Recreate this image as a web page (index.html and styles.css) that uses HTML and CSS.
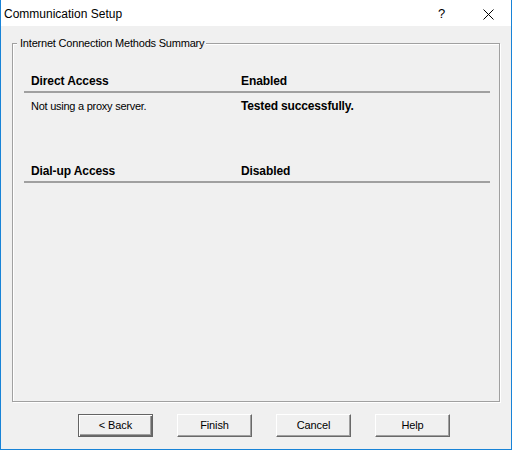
FILE: index.html
```html
<!DOCTYPE html>
<html>
<head>
<meta charset="utf-8">
<title>Communication Setup</title>
<link rel="stylesheet" href="styles.css">
</head>
<body>
<div class="window">
  <div class="titlebar">
    <span class="title">Communication Setup</span>
    <div class="caption-buttons">
      <span class="cap-btn help">?</span>
      <span class="cap-btn close">
        <svg width="11" height="11" viewBox="0 0 11 11"><path d="M0.5 0.5 L10.5 10.5 M10.5 0.5 L0.5 10.5" stroke="#000" stroke-width="1" fill="none"/></svg>
      </span>
    </div>
  </div>
  <div class="client">
    <fieldset class="group">
      <legend>Internet Connection Methods Summary</legend>
      <div class="summary">
        <div class="section">
          <div class="head"><span>Direct Access</span><span>Enabled</span></div>
          <div class="detail"><span>Not using a proxy server.</span><span class="strong">Tested successfully.</span></div>
        </div>
        <div class="section second">
          <div class="head"><span>Dial-up Access</span><span>Disabled</span></div>
        </div>
      </div>
    </fieldset>
    <div class="buttons">
      <button class="btn default">&lt; Back</button>
      <button class="btn">Finish</button>
      <button class="btn">Cancel</button>
      <button class="btn">Help</button>
    </div>
  </div>
</div>
</body>
</html>
```

FILE: styles.css
```css
* { box-sizing: border-box; }
html, body {
  margin: 0;
  padding: 0;
  background: #f0f0f0;
}
.window {
  width: 512px;
  height: 450px;
  border: 1px solid #1883d7;
  border-top: none;
  background: #f0f0f0;
  display: flex;
  flex-direction: column;
  font-family: "Liberation Sans", Arial, sans-serif;
  color: #000;
}
.titlebar {
  height: 26px;
  background: #fff;
  display: flex;
  align-items: center;
  justify-content: space-between;
  flex: none;
}
.title {
  font-size: 12px;
  padding-left: 3px;
  padding-top: 1px;
}
.caption-buttons {
  display: flex;
  height: 100%;
}
.cap-btn {
  width: 46px;
  height: 100%;
  display: flex;
  align-items: center;
  justify-content: center;
}
.help {
  font-size: 13px;
  padding-top: 1px;
  padding-right: 1px;
}
.close svg { display: block; margin-top: 2px; }
.client {
  flex: 1;
  display: flex;
  flex-direction: column;
}
.group {
  margin: 11px 11px 0 11px;
  height: 365px;
  padding: 0;
  border: 1px solid #a0a0a0;
  box-shadow: 1px 1px 0 #fff, inset 1px 1px 0 #fff;
  min-width: 0;
}
.group legend {
  font-size: 11px;
  line-height: 13px;
  letter-spacing: -0.2px;
  margin-left: 4px;
  padding: 0 2px 0 3px;
  background: #f0f0f0;
}
.summary {
  margin: 25px 9px 0 11px;
}
.head, .detail {
  display: grid;
  grid-template-columns: 210px 1fr;
  padding-left: 7px;
  line-height: 13px;
}
.head {
  font-size: 12px;
  font-weight: bold;
  padding-bottom: 3px;
  border-bottom: 2px solid #a0a0a0;
  letter-spacing: -0.1px;
}
.detail {
  font-size: 11px;
  letter-spacing: -0.25px;
  margin-top: 7px;
}
.detail .strong {
  font-size: 12px;
  font-weight: bold;
  letter-spacing: -0.15px;
}
.second {
  margin-top: 52px;
}
.buttons {
  display: flex;
  gap: 24px;
  padding-left: 77px;
  margin-top: 12px;
}
.btn {
  width: 75px;
  height: 23px;
  padding: 0 0 2px 0;
  margin: 0;
  font-family: "Liberation Sans", Arial, sans-serif;
  font-size: 11px;
  letter-spacing: -0.1px;
  color: #000;
  background: #f0f0f0;
  border: 1px solid;
  border-color: #fff #696969 #696969 #fff;
  box-shadow: inset -1px -1px 0 #a0a0a0;
  border-radius: 0;
}
.btn.default {
  border: 1px solid #646464;
  box-shadow: inset 1px 1px 0 #fff, inset -1px -1px 0 #696969, inset -2px -2px 0 #a0a0a0;
}
```
